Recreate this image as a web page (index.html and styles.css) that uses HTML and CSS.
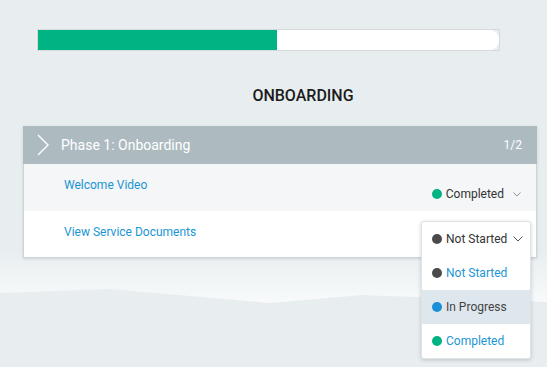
FILE: index.html
```html
<!DOCTYPE html>
<html lang="en">
<head>
  <meta charset="UTF-8" />
  <title>Onboarding</title>
  <link rel="stylesheet" href="styles.css">
</head>
<body>
  <!-- Decorative hills behind the content -->
  <svg class="hills" width="547" height="80" viewBox="0 0 547 80">
    <defs>
      <linearGradient id="band" x1="0" y1="0" x2="0" y2="1">
        <stop offset="0" stop-color="#e8eef0" />
        <stop offset="1" stop-color="#f8fafb" />
      </linearGradient>
    </defs>
    <polygon points="0,10 547,10 547,62 362,55 270,63 110,49 0,53" fill="url(#band)" />
  </svg>

  <div class="page">
    <div class="progress">
      <div class="progress-track">
        <div class="progress-fill" style="width: 239px"></div>
      </div>
    </div>

    <h1 class="title">ONBOARDING</h1>

    <div class="card">
      <div class="card-header">
        <svg class="header-chevron" width="12" height="22" viewBox="0 0 12 22">
          <polyline points="1,1 11,11 1,21" fill="none" stroke="#fff" stroke-width="1.4" />
        </svg>
        <span class="phase-name">Phase 1: Onboarding</span>
        <span class="phase-count">1/2</span>
      </div>

      <div class="task task-odd">
        <a class="task-link" href="#">Welcome Video</a>
        <div class="status">
          <span class="dot dot-green"></span>
          <span class="status-text">Completed</span>
          <svg class="status-chevron" width="8" height="5" viewBox="0 0 8 5">
            <polyline points="0.5,0.5 4,4 7.5,0.5" fill="none" stroke="#8d9599" stroke-width="1" />
          </svg>
        </div>
      </div>

      <div class="task">
        <a class="task-link" href="#">View Service Documents</a>
        <div class="select-open">
          <div class="select-trigger">
            <span class="dot dot-dark"></span>
            <span>Not Started</span>
            <svg class="trigger-chevron" width="10" height="6" viewBox="0 0 10 6">
              <polyline points="0.5,0.5 5,5 9.5,0.5" fill="none" stroke="#555" stroke-width="1" />
            </svg>
          </div>
          <div class="option">
            <span class="dot dot-dark"></span>
            <span>Not Started</span>
          </div>
          <div class="option option-active">
            <span class="dot dot-blue"></span>
            <span>In Progress</span>
          </div>
          <div class="option">
            <span class="dot dot-green"></span>
            <span>Completed</span>
          </div>
        </div>
      </div>
    </div>
  </div>
</body>
</html>
```

FILE: styles.css
```css
body {
  margin: 0;
  background: #e8eef0;
  font-family: Roboto, "Liberation Sans", Arial, sans-serif;
  color: #333;
  position: relative;
  overflow: hidden;
  height: 367px;
}
.hills {
  position: absolute;
  top: 240px;
  left: 0;
  z-index: 0;
}
.page {
  position: relative;
  z-index: 1;
  padding-top: 29px;
}
.progress {
  margin-left: 37px;
  width: 461px;
  height: 20px;
  border: 1px solid #d3d9dc;
}
.progress-track {
  height: 100%;
  background: #fff;
  border-radius: 0 9px 9px 0;
  display: flex;
}
.progress-fill {
  background: #00b383;
}
.title {
  margin: 35px 0 0 23px;
  width: 468px;
  padding-left: 46px;
  text-align: center;
  font-size: 16px;
  line-height: 20px;
  font-weight: 500;
  color: #1c1c1c;
}
.card {
  margin: 20px 0 0 23px;
  width: 512px;
  border: 1px solid #cdd4d7;
  background: #fff;
  box-shadow: 0 1px 3px rgba(0, 0, 0, 0.12);
}
.card-header {
  height: 38px;
  margin: -1px -1px 0 -1px;
  background: #adbbc1;
  display: flex;
  align-items: center;
  padding: 0 15px 0 14px;
  color: #fff;
}
.header-chevron {
  margin-right: 12px;
}
.phase-name {
  font-size: 14px;
  flex: 1;
}
.phase-count {
  font-size: 12px;
}
.task {
  height: 46px;
  display: flex;
  justify-content: space-between;
  position: relative;
}
.task-odd {
  height: 47px;
  background: #f4f6f7;
}
.task-link {
  font-size: 12px;
  line-height: 14px;
  padding: 14px 0 0 40px;
  color: #1b95d3;
  text-decoration: none;
}
.status {
  display: flex;
  align-items: center;
  gap: 4px;
  margin-top: 23px;
  height: 14px;
  padding-right: 15px;
  font-size: 12px;
  color: #333;
}
.status-chevron {
  margin-left: 5px;
}
.dot {
  width: 10px;
  height: 10px;
  border-radius: 50%;
  display: inline-block;
}
.dot-green {
  background: #00b383;
}
.dot-dark {
  background: #4a4a4a;
}
.dot-blue {
  background: #1a8fd6;
}
.select-open {
  position: absolute;
  top: 10px;
  right: 5px;
  width: 108px;
  background: #fff;
  border: 1px solid #dfe4e6;
  border-radius: 3px;
  box-shadow: 0 1px 4px rgba(0, 0, 0, 0.18);
  font-size: 12px;
}
.select-trigger, .option {
  display: flex;
  align-items: center;
  gap: 4px;
  padding-left: 10px;
}
.select-trigger {
  height: 34px;
  color: #333;
}
.trigger-chevron {
  margin-left: 2px;
}
.option {
  height: 34px;
  color: #1b95d3;
}
.option-active {
  background: #dee7ed;
  color: #444;
}
```
